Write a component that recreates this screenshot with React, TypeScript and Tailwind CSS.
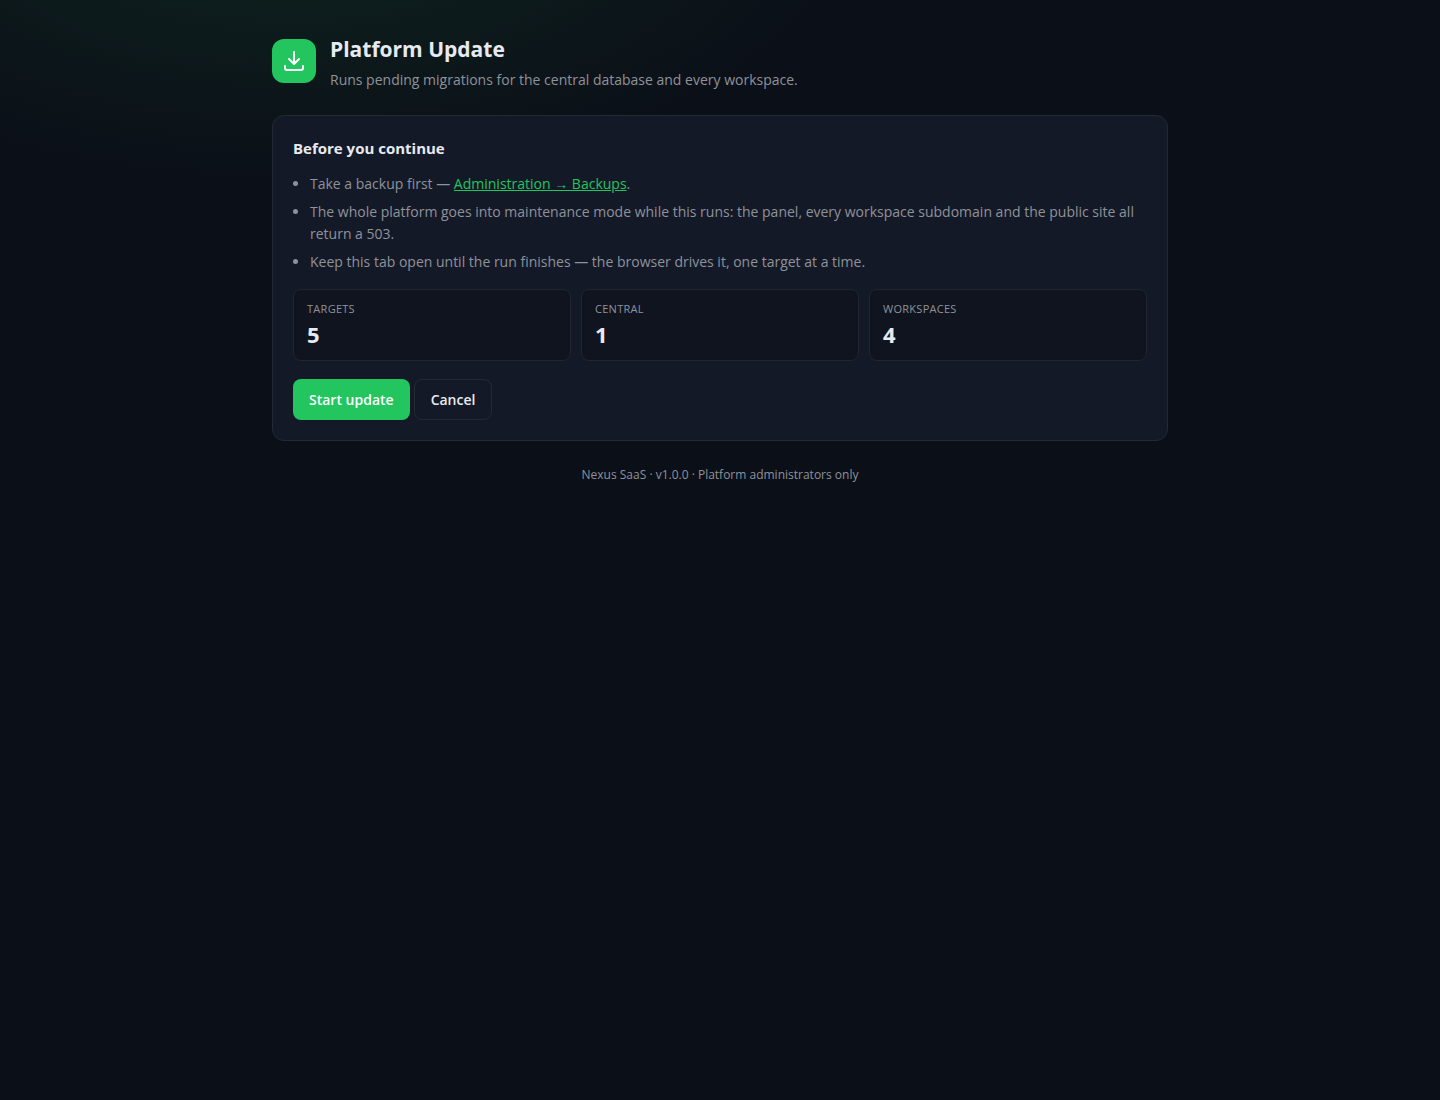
import React from "react";

const stats = [
  { label: "Targets", value: 5 },
  { label: "Central", value: 1 },
  { label: "Workspaces", value: 4 },
];

export default function App() {
  return (
    <div className="min-h-screen bg-[#0b0f17] bg-[radial-gradient(1200px_600px_at_20%_-10%,rgba(34,197,94,0.12),transparent_50%)] font-['Open_Sans','Noto_Sans',sans-serif] text-sm leading-[22px] text-[#e8eaf2]">
      <main className="mx-auto max-w-[960px] px-8 pt-[31px] pb-16">
        <header className="mb-6 flex items-center gap-3.5">
          <div className="grid size-11 shrink-0 place-items-center rounded-xl bg-[#22c55e]">
            <svg
              className="size-6"
              viewBox="0 0 24 24"
              fill="none"
              stroke="#fff"
              strokeWidth="2"
              strokeLinecap="round"
              strokeLinejoin="round"
              aria-hidden="true"
            >
              <path d="M12 3v12m0 0 5-5m-5 5-5-5" />
              <path d="M3 17v2a2 2 0 0 0 2 2h14a2 2 0 0 0 2-2v-2" />
            </svg>
          </div>
          <div>
            <h1 className="mb-0.5 text-[21px] leading-9 font-bold">Platform Update</h1>
            <p className="text-[#8f929b]">
              Runs pending migrations for the central database and every workspace.
            </p>
          </div>
        </header>

        <section className="rounded-xl border border-[#262933] bg-[#141927] p-5">
          <h2 className="mb-[13px] text-[15px] leading-6 font-bold">Before you continue</h2>
          <ul className="mb-4 list-disc space-y-1.5 pl-[17px] text-[#8f929b]">
            <li>
              Take a backup first —{" "}
              <a href="#backups" className="text-[#22c55e] underline">
                Administration → Backups
              </a>
              .
            </li>
            <li>
              The whole platform goes into maintenance mode while this runs: the panel, every
              workspace subdomain and the public site all return a 503.
            </li>
            <li>
              Keep this tab open until the run finishes — the browser drives it, one target at a
              time.
            </li>
          </ul>

          <dl className="mb-[18px] grid grid-cols-3 gap-2.5">
            {stats.map((s) => (
              <div key={s.label} className="rounded-lg border border-[#22252f] bg-[#10141f] px-[13px] py-2.5">
                <dt className="text-[11px] leading-[18px] tracking-wide text-[#8f929b] uppercase">
                  {s.label}
                </dt>
                <dd className="text-[22px] leading-8 font-bold">{s.value}</dd>
              </div>
            ))}
          </dl>

          <div className="flex gap-1">
            <button
              type="button"
              className="rounded-lg bg-[#22c55e] px-4 py-2.5 leading-[21px] font-semibold text-white"
            >
              Start update
            </button>
            <button
              type="button"
              className="rounded-lg border border-[#262933] px-4 py-[9px] leading-[21px] font-semibold"
            >
              Cancel
            </button>
          </div>
        </section>

        <footer className="mt-6 text-center text-xs leading-5 text-[#8f929b]">
          Nexus SaaS · v1.0.0 · Platform administrators only
        </footer>
      </main>
    </div>
  );
}
